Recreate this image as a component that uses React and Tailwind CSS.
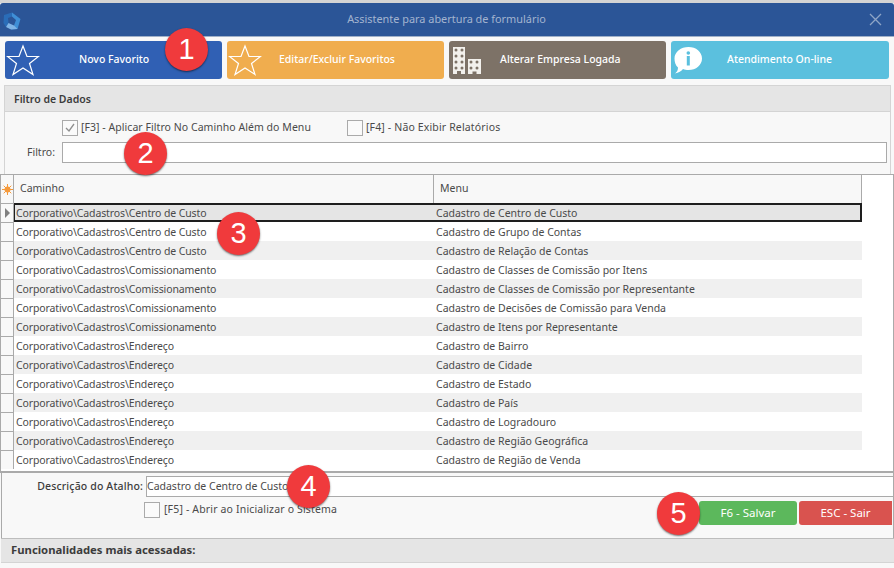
import React from 'react';

const rows = [
  ['Corporativo\\Cadastros\\Centro de Custo', 'Cadastro de Centro de Custo'],
  ['Corporativo\\Cadastros\\Centro de Custo', 'Cadastro de Grupo de Contas'],
  ['Corporativo\\Cadastros\\Centro de Custo', 'Cadastro de Relação de Contas'],
  ['Corporativo\\Cadastros\\Comissionamento', 'Cadastro de Classes de Comissão por Itens'],
  ['Corporativo\\Cadastros\\Comissionamento', 'Cadastro de Classes de Comissão por Representante'],
  ['Corporativo\\Cadastros\\Comissionamento', 'Cadastro de Decisões de Comissão para Venda'],
  ['Corporativo\\Cadastros\\Comissionamento', 'Cadastro de Itens por Representante'],
  ['Corporativo\\Cadastros\\Endereço', 'Cadastro de Bairro'],
  ['Corporativo\\Cadastros\\Endereço', 'Cadastro de Cidade'],
  ['Corporativo\\Cadastros\\Endereço', 'Cadastro de Estado'],
  ['Corporativo\\Cadastros\\Endereço', 'Cadastro de País'],
  ['Corporativo\\Cadastros\\Endereço', 'Cadastro de Logradouro'],
  ['Corporativo\\Cadastros\\Endereço', 'Cadastro de Região Geográfica'],
  ['Corporativo\\Cadastros\\Endereço', 'Cadastro de Região  de Venda'],
];

const StarIcon = () => (
  <svg width="34" height="32" viewBox="0 0 34 32" fill="none" stroke="white" strokeWidth="1.2">
    <polygon points="17,2 21,12.5 32.5,12.5 23.5,19.5 27,30.5 17,24 7,30.5 10.5,19.5 1.5,12.5 13,12.5" />
  </svg>
);

// windows of the two towers, drawn as small rings
const towerWindows = [
  [4, 4], [10, 4], [4, 10], [10, 10], [4, 16], [10, 16], [4, 22], [10, 22],
  [19, 16], [25, 16], [19, 22], [25, 22],
];

const BuildingIcon = () => (
  <svg width="30" height="29" viewBox="0 0 30 29">
    <rect x="1" y="1" width="12" height="27" fill="#f2f0ec" />
    <rect x="16" y="13" width="13" height="15" fill="#f2f0ec" />
    {towerWindows.map(([x, y], index) => (
      <circle key={index} cx={x} cy={y} r="1.500" fill="#7d7267" />
    ))}
    <rect x="5" y="25" width="4" height="3" fill="#7d7267" />
    <rect x="20.500" y="25.500" width="4" height="2.500" fill="#7d7267" />
  </svg>
);

const InfoIcon = () => (
  <svg width="29" height="27" viewBox="0 0 29 27">
    <path fill="white" d="M14.500 0C22 0 28 4.800 28 11.500S22 23 14.500 23c-2 0-4-.4-5.500-1-1.500 2-4.500 4-8 4.500 2-1.500 3-3.500 3-6C1.500 18.500.5 15 .5 11.500.5 4.800 7 0 14.500 0z" />
    <circle cx="14.300" cy="6" r="1.800" fill="#5bc0de" />
    <rect x="12.800" y="9" width="3" height="9.500" fill="#5bc0de" />
  </svg>
);

const TopButton = ({ color, icon, label, iconClass, labelClass }) => (
  <button className={`relative h-[38px] rounded-[3px] ${color} text-white text-[10.5px] font-medium flex items-center`}>
    <span className={iconClass}>{icon}</span>
    <span className={labelClass}>{label}</span>
  </button>
);

const CheckBox = ({ checked }) => (
  <span className="w-4 h-4 border border-[#aaaaaa] bg-[#fafafa] flex items-center justify-center">
    {checked && (
      <svg width="12" height="12" viewBox="0 0 12 12" fill="none" stroke="#8f8f8f" strokeWidth="1.300">
        <path d="M2 6l3 3 5-7" />
      </svg>
    )}
  </span>
);

const Badge = ({ n, pos }) => (
  <div className={`absolute ${pos} w-[43px] h-[43px] rounded-full bg-[#f03a3c] text-white text-[29px] flex items-center justify-center shadow-[0_1px_2px_rgba(0,0,0,0.55)] font-['Liberation_Sans',sans-serif]`}>
    {n}
  </div>
);

export default function App() {
  return (
    <div className="relative w-[894px] h-[568px] overflow-hidden bg-[#f8f8f8] text-[#4a4a4a] text-[10.5px] font-['Noto_Sans',sans-serif]">
      <div className="h-[3px] bg-[#d4d4d4]" />

      {/* title bar */}
      <div className="h-[34px] bg-[#2b5597] rounded-t-[3px] flex items-center pl-[3px] border-b border-[#9fb0c8]">
        <svg className="mt-[3px]" width="18" height="18" viewBox="0 0 18 18" fill="none">
          <path d="M9 0.500 17.500 7 14.500 17 8 17.500 11 13.500 13 8 9 4.500z" fill="#3f8fd6" />
          <path d="M9 0.500 1 3 0.500 11 3 15 5.500 11 5 6 9 4.500z" fill="#2a6db8" />
          <path d="M3 15 8 17.500 14.500 17 11 13.500 5.500 11z" fill="#7fb4e6" />
        </svg>
        <div className="flex-1 pl-[3px] text-center text-[#a3b4cf] text-[10.9px]">Assistente para abertura de formulário</div>
        <svg className="mr-[12px]" width="13" height="13" viewBox="0 0 13 13" stroke="#8fa5c6" strokeWidth="1.300">
          <path d="M1 1l11 11M12 1L1 12" />
        </svg>
      </div>

      {/* action buttons */}
      <div className="grid grid-cols-[217px_217px_217px_218px] gap-[5px] pl-[5px] pt-[4px]">
        <TopButton color="bg-[#3060b4]" icon={<StarIcon />} label="Novo Favorito" iconClass="w-[34px] ml-[1px]" labelClass="ml-[39px]" />
        <TopButton color="bg-[#f0ad4e]" icon={<StarIcon />} label="Editar/Excluir Favoritos" iconClass="w-[34px] ml-[1px]" labelClass="ml-[17px]" />
        <TopButton color="bg-[#7d7267]" icon={<BuildingIcon />} label="Alterar Empresa Logada" iconClass="w-[30px] ml-[3px]" labelClass="ml-[18px]" />
        <TopButton color="bg-[#5bc0de]" icon={<InfoIcon />} label="Atendimento On-line" iconClass="w-[29px] ml-[3px]" labelClass="ml-[24px]" />
      </div>

      {/* filter panel */}
      <div className="ml-[4px] mt-[6px] w-[887px] h-[90px] border-t border-x border-[#d4d4d4]">
        <div className="h-[26px] bg-[#e5e5e5] border-b border-[#d4d4d4] flex items-center pl-[9px] pt-[2px] font-semibold text-[#3c3c3c]">Filtro de Dados</div>
        <div className="flex items-center h-[30px] pl-[57px] pt-[1px] tracking-[0.05px]">
          <CheckBox checked />
          <span className="ml-[3px] w-[266px]">[F3] - Aplicar Filtro No Caminho Além do Menu</span>
          <CheckBox />
          <span className="ml-[3px] tracking-[0.15px]">[F4] - Não Exibir Relatórios</span>
        </div>
        <div className="flex items-center">
          <span className="ml-[22px] w-[35px]">Filtro:</span>
          <div className="w-[825px] h-[21px] bg-white border border-[#aaaaaa]" />
        </div>
      </div>

      {/* grid */}
      <div className="h-[299px] bg-white border-t border-x border-[#aaaaaa] border-b-2 border-b-[#aaaaaa] mt-[-1px]">
        <div className="flex h-[28px]">
          <div className="w-[13px] bg-[#f8f8f8] border-r border-[#aaaaaa] flex items-center justify-center">
            <svg width="11" height="11" viewBox="0 0 11 11" stroke="#f59a3c" strokeWidth="1">
              <path d="M5.500 0v11M0 5.500h11M1.700 1.700l7.600 7.600M9.300 1.700l-7.600 7.600" />
              <circle cx="5.500" cy="5.500" r="3" fill="#f59a3c" stroke="none" />
            </svg>
          </div>
          <div className="w-[420px] bg-[#f8f8f8] border-r border-[#aaaaaa] flex items-center pl-[6px]">Caminho</div>
          <div className="w-[428px] bg-[#f8f8f8] border-r border-[#aaaaaa] flex items-center pl-[6px]">Menu</div>
        </div>
        {rows.map((row, index) => (
          <div key={index} className="flex h-[19px]">
            <div className="w-[13px] shrink-0 border-t border-r border-[#aaaaaa] bg-[#f8f8f8] flex items-center justify-center">
              {index === 0 && <span className="border-y-[5px] border-y-transparent border-l-[5px] border-l-[#808080]" />}
            </div>
            <div className={`w-[848px] flex items-center leading-none pt-[1px] ${index === 0 ? 'bg-[#e5e5e5] border-2 border-[#1e1e1e] border-l-[1.5px]' : index % 2 === 0 ? 'bg-[#f0f0f0]' : 'bg-white'}`}>
              <span className={`w-[420px] tracking-[-0.12px] ${index === 0 ? 'pl-[1px]' : 'pl-[2px]'}`}>{row[0]}</span>
              <span className={index === 0 ? 'pl-[1px]' : 'pl-[2px]'}>{row[1]}</span>
            </div>
          </div>
        ))}
      </div>

      {/* shortcut form */}
      <div className="relative h-[65px] ml-[1px] border-x border-[#aaaaaa] pt-[3px]">
        <div className="flex items-center">
          <span className="w-[141px] text-right font-medium text-[#3c3c3c] tracking-[0.15px]">Descrição do Atalho:</span>
          <div className="ml-[3px] flex-1 h-[21px] bg-white border border-[#aaaaaa] border-r-0 flex items-center">Cadastro de Centro de Custo</div>
        </div>
        <div className="flex items-center pl-[142px] mt-[5px]">
          <CheckBox />
          <span className="ml-[4px] tracking-[0.16px]">[F5] - Abrir ao Inicializar o Sistema</span>
        </div>
        <div className="absolute top-[28px] right-[1px] flex gap-[2px] text-white text-[11.5px]">
          <div className="w-[98px] h-[24px] rounded-[3px] bg-[#5cb85c] flex items-center justify-center">F6 - Salvar</div>
          <div className="w-[93px] h-[24px] rounded-l-[3px] bg-[#d9534f] flex items-center justify-center">ESC - Sair</div>
        </div>
      </div>

      {/* footer panel */}
      <div className="ml-[1px] h-[25px] bg-[#e5e5e5] border-y border-[#bdbdbd] border-b-[#d4d4d4] flex items-center pl-[10px] font-bold text-[11.3px] text-[#3c3c3c]">Funcionalidades mais acessadas:</div>

      <Badge n="1" pos="left-[165px] top-[28px]" />
      <Badge n="2" pos="left-[124px] top-[132px]" />
      <Badge n="3" pos="left-[217px] top-[212px]" />
      <Badge n="4" pos="left-[287px] top-[465px]" />
      <Badge n="5" pos="left-[657px] top-[492px]" />
    </div>
  );
}
